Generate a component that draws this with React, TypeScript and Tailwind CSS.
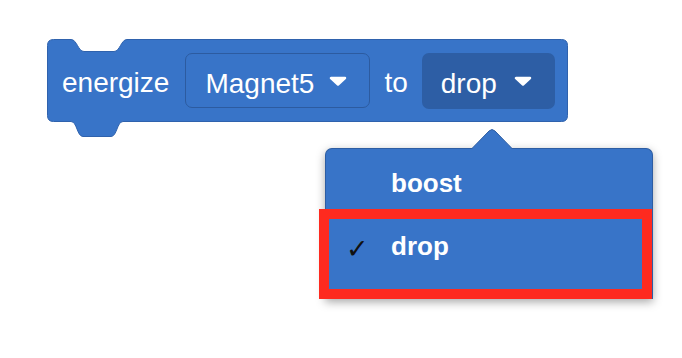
const Caret = () => (
  <svg width="18" height="10" viewBox="0 0 18 10" className="shrink-0">
    <path d="M2 2 L16 2 L9 8.5 Z" fill="white" stroke="white" strokeWidth="2.5" strokeLinejoin="round" />
  </svg>
);

const BlockShape = () => (
  <svg
    width="522"
    height="100"
    viewBox="0 0 522 100"
    className="absolute left-0 top-0 -z-0"
  >
    <path
      d="M0.5 6.5 Q0.5 0.5 6.5 0.5 L24 0.5 C30 0.5 31 12.5 37 12.5 L67 12.5 C73 12.5 74 0.5 80 0.5 L514.5 0.5 Q520.5 0.5 520.5 6.5 L520.5 76.5 Q520.5 82.5 514.5 82.5 L76 82.5 C70 82.5 70 97.5 64 97.5 L36 97.5 C30 97.5 30 82.5 24 82.5 L6.5 82.5 Q0.5 82.5 0.5 76.5 Z"
      fill="#3874c8"
      stroke="#2f62ad"
      strokeWidth="1"
    />
  </svg>
);

export default function App() {
  return (
    <div
      className="h-[358px] w-[682px] overflow-hidden bg-white pt-[39px]"
      style={{ fontFamily: '"Liberation Sans", Arial, sans-serif' }}
    >
      {/* block */}
      <div className="relative ml-[47px] h-[83px] w-[521px]">
        <BlockShape />
        <div className="relative flex h-full items-center pl-[15px] text-[28px] text-white">
          <span className="pt-[4px]">energize</span>
          <div className="ml-[16px] flex h-[55px] w-[185px] items-center gap-[15px] rounded-[7px] border border-[#2c5ba0] pl-[19px] pt-[1px]">
            <span className="pt-[6px]">Magnet5</span>
            <Caret />
          </div>
          <span className="ml-[14px] pt-[4px]">to</span>
          <div className="ml-[14px] flex h-[56px] w-[133px] items-center gap-[17px] rounded-[7px] bg-[#2d5ea5] pl-[19px]">
            <span className="pt-[6px]">drop</span>
            <Caret />
          </div>
        </div>
      </div>

      {/* dropdown menu */}
      <div className="relative ml-[325px] mt-[26px] w-[328px] rounded-t-[7px] border border-b-0 border-[#2d5da3] bg-[#3874c8] shadow-[0_3px_10px_rgba(0,0,0,0.35)]">
        <svg
          width="42"
          height="22"
          viewBox="0 0 42 22"
          className="absolute left-[145px] top-[-21px]"
        >
          <path
            d="M0 21.5 L18 3 Q21 0 24 3 L42 21.5 Z"
            fill="#3874c8"
            stroke="#2d5da3"
            strokeWidth="1"
          />
          <rect x="0" y="21" width="42" height="2" fill="#3874c8" />
        </svg>
        <div className="h-[60px] pl-[65px] pt-[19px] text-[26px] font-bold leading-[30px] text-white">
          boost
        </div>
        <div className="-ml-[7px] flex h-[90px] items-start border-[10px] border-[#fe2a1f] bg-[#3874c8] pt-[12px] text-[26px] font-bold leading-[30px] text-white">
          <span
            className="ml-[17px] w-[45px] pt-[3px] text-[27px] font-bold leading-[30px] text-[#111]"
            style={{ fontFamily: '"DejaVu Sans", sans-serif' }}
          >
            ✓
          </span>
          <span>drop</span>
        </div>
      </div>
    </div>
  );
}
